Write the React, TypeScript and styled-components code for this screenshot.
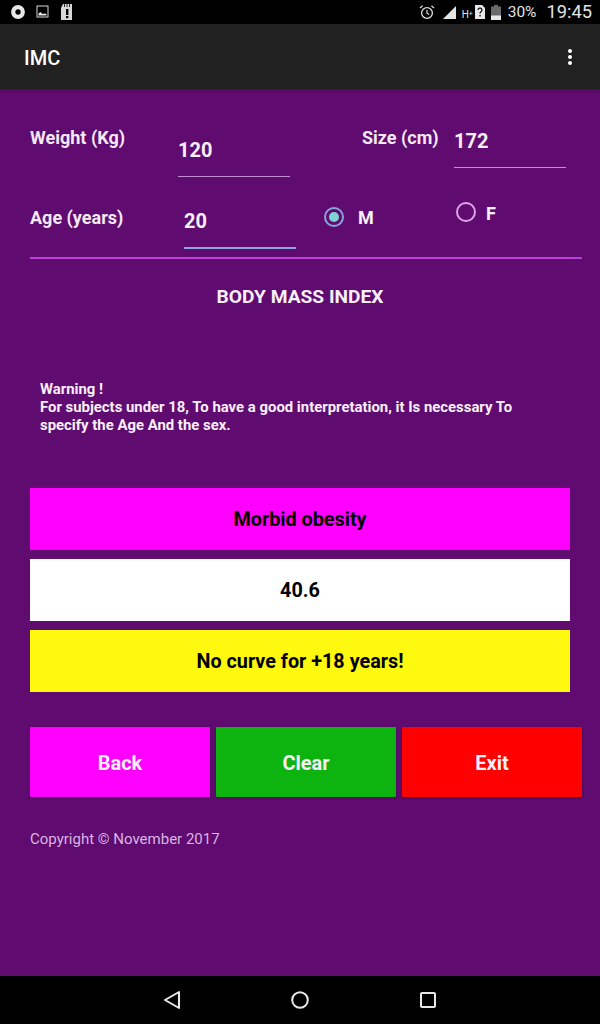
import { createGlobalStyle, styled } from "styled-components";

const GlobalStyle = createGlobalStyle`
  html, body {
    margin: 0;
    padding: 0;
    background: #000;
  }
  * {
    box-sizing: border-box;
  }
`;

const Screen = styled.div`
  display: flex;
  flex-direction: column;
  width: 600px;
  height: 1024px;
  font-family: Roboto, "Liberation Sans", sans-serif;
  color: #fff;
  overflow: hidden;
`;

const StatusBar = styled.div`
  display: flex;
  justify-content: space-between;
  align-items: center;
  flex: 0 0 24px;
  padding: 0 8px 0 10px;
  background: #000;
`;

const StatusGroup = styled.div<{ $gap?: number }>`
  display: flex;
  align-items: center;
  gap: ${(p) => p.$gap ?? 0}px;
`;

const StatusSlot = styled.span<{ $left: number }>`
  display: flex;
  margin-left: ${(p) => p.$left}px;
`;

const StatusText = styled.span<{ $size: number; $left: number }>`
  margin-left: ${(p) => p.$left}px;
  font-size: ${(p) => p.$size}px;
  line-height: 24px;
  color: #e4e4e4;
`;

const NetworkText = styled.span`
  margin: 5px 0 0 5px;
  width: 13px;
  font-size: 10px;
  line-height: 14px;
  color: #e4e4e4;
`;

const Toolbar = styled.div`
  display: flex;
  justify-content: space-between;
  align-items: center;
  flex: 0 0 65px;
  padding: 2px 28px 0 24px;
  background: #212121;
`;

const AppTitle = styled.h1`
  margin: 0;
  font-size: 20px;
  font-weight: 500;
`;

const Dots = styled.div`
  display: flex;
  flex-direction: column;
  gap: 2px;
  margin-top: -2px;
`;

const Dot = styled.span`
  width: 4px;
  height: 4px;
  border-radius: 50%;
  background: #fff;
`;

const Main = styled.main`
  flex: 1;
  padding: 39px 0 0 30px;
  background: linear-gradient(#4f0a5d 0, #600b70 4px);
`;

const Row = styled.div<{ $height: number }>`
  display: flex;
  align-items: flex-start;
  height: ${(p) => p.$height}px;
`;

const Label = styled.label<{ $width: number; $left?: number }>`
  flex: 0 0 ${(p) => p.$width}px;
  margin-left: ${(p) => p.$left ?? 0}px;
  font-size: 18px;
  font-weight: 700;
  line-height: 20px;
  color: #f3e9f5;
`;

const NumberInput = styled.input<{ $height: number; $lift: number; $focused?: boolean }>`
  display: block;
  flex: 0 0 112px;
  width: 112px;
  height: ${(p) => p.$height}px;
  padding: 0 0 ${(p) => p.$lift}px;
  border: 0;
  border-bottom: ${(p) => (p.$focused ? "2px solid #8fa5de" : "1px solid #c08fd0")};
  border-radius: 0;
  outline: none;
  background: transparent;
  color: #f7eff9;
  font-family: inherit;
  font-size: 20px;
  font-weight: 700;
`;

const RadioGroup = styled.div`
  display: flex;
  margin-left: 28px;
`;

const RadioOption = styled.div<{ $width?: number; $top: number; $gap: number }>`
  display: flex;
  align-items: center;
  gap: ${(p) => p.$gap}px;
  width: ${(p) => (p.$width ? `${p.$width}px` : "auto")};
  height: 20px;
  margin-top: ${(p) => p.$top}px;
`;

const RadioText = styled.span<{ $top: number }>`
  margin-top: ${(p) => p.$top}px;
  font-size: 18px;
  font-weight: 700;
  color: #f7eff9;
`;

const RadioCircle = styled.span<{ $checked?: boolean }>`
  display: flex;
  align-items: center;
  justify-content: center;
  width: 20px;
  height: 20px;
  border-radius: 50%;
  border: 2px solid ${(p) => (p.$checked ? "#84a6d8" : "#dba6e6")};
  &::after {
    content: "";
    display: ${(p) => (p.$checked ? "block" : "none")};
    width: 10px;
    height: 10px;
    border-radius: 50%;
    background: #7fd3d3;
  }
`;

const Divider = styled.div`
  width: 552px;
  height: 2px;
  background: #bd3fdb;
`;

const SectionTitle = styled.h2`
  width: 540px;
  margin: 26px 0 0;
  font-size: 19.2px;
  font-weight: 700;
  line-height: 24px;
  text-align: center;
  color: #f7eff9;
`;

const Warning = styled.p`
  width: 500px;
  margin: 71px 0 0;
  padding-left: 10px;
  font-size: 14.9px;
  font-weight: 700;
  line-height: 18px;
  color: #f7eff9;
`;

const ResultList = styled.div`
  display: flex;
  flex-direction: column;
  gap: 9px;
  width: 540px;
  margin-top: 54px;
`;

const ResultBar = styled.div<{ $bg: string }>`
  display: flex;
  align-items: center;
  justify-content: center;
  height: 62px;
  padding-top: 1px;
  background: ${(p) => p.$bg};
  color: #000;
  font-size: 19.8px;
  font-weight: 700;
`;

const ButtonRow = styled.div`
  display: flex;
  gap: 6px;
  margin-top: 35px;
`;

const ActionButton = styled.button<{ $bg: string }>`
  width: 180px;
  height: 70px;
  padding: 2px 0 0;
  border: 0;
  border-radius: 1px;
  background: ${(p) => p.$bg};
  box-shadow: 0 1px 3px rgba(0, 0, 0, 0.35);
  color: #f7eff9;
  font-family: inherit;
  font-size: 20px;
  font-weight: 700;
`;

const Copyright = styled.p`
  margin: 32px 0 0;
  font-size: 15px;
  line-height: 20px;
  color: #d8b4e2;
`;

const NavBar = styled.nav`
  display: flex;
  justify-content: center;
  align-items: center;
  gap: 111px;
  flex: 0 0 48px;
  padding: 0 2px 1px 0;
  background: #000;
`;

const DiscIcon = () => (
  <svg width="16" height="16" viewBox="0 0 16 16">
    <circle cx="8" cy="8" r="4.8" fill="none" stroke="#e8e8e8" strokeWidth="4.2" />
  </svg>
);

const ImageIcon = () => (
  <svg width="14" height="14" viewBox="0 0 14 14">
    <rect x="1" y="1" width="11" height="11" fill="none" stroke="#d8d8d8" />
    <path d="M2.5 10.5V8.5l2-1.5 2 2 2-.5 2 .5v1.5z" fill="#e8e8e8" />
  </svg>
);

const SdIcon = () => (
  <svg width="14" height="18" viewBox="0 0 14 18">
    <path d="M3 1h9v16H1V5z" fill="#d8d8d8" />
    <rect x="6" y="6" width="2.4" height="6" fill="#000" />
    <rect x="6" y="13" width="2.4" height="2.2" fill="#000" />
    <path d="M4.5 1v3M7 1v3M9.5 1v3" stroke="#000" strokeWidth="0.8" />
  </svg>
);

const AlarmIcon = () => (
  <svg width="16" height="16" viewBox="0 0 16 16" fill="none" stroke="#e0e0e0">
    <circle cx="8" cy="9" r="5.4" strokeWidth="1.3" />
    <path d="M8 6v3.2l2.2 1.3M1 4l2.6-2.2M15 4l-2.6-2.2" strokeWidth="1.2" />
  </svg>
);

const SignalIcon = () => (
  <svg width="15" height="15" viewBox="0 0 15 15">
    <path d="M14 1v13H1z" fill="#e4e4e4" />
  </svg>
);

const SimIcon = () => (
  <svg width="10" height="14" viewBox="0 0 10 14">
    <path d="M0 0h7l3 3v11H0z" fill="#e8e8e8" />
    <path d="M3 5a2 2 0 1 1 3 1.8c-.7.4-1 .8-1 1.7" fill="none" stroke="#000" strokeWidth="1.2" />
    <rect x="4.4" y="10" width="1.3" height="1.4" fill="#000" />
  </svg>
);

const BatteryIcon = () => (
  <svg width="10" height="15" viewBox="0 0 10 15">
    <path d="M3 0h4v1.4h3V15H0V1.4h3z" fill="#6a6a6a" />
    <rect y="10.5" width="10" height="4.5" fill="#e8e8e8" />
  </svg>
);

const BackIcon = () => (
  <svg width="18" height="20" viewBox="0 0 18 20">
    <path d="M17 2v16L3 10z" fill="none" stroke="#e8e8e8" strokeWidth="2" strokeLinejoin="round" />
  </svg>
);

const HomeIcon = () => (
  <svg width="18" height="18" viewBox="0 0 18 18">
    <circle cx="9" cy="9" r="7.8" fill="none" stroke="#e8e8e8" strokeWidth="2" />
  </svg>
);

const RecentIcon = () => (
  <svg width="16" height="16" viewBox="0 0 16 16">
    <rect x="1" y="1" width="14" height="14" rx="1" fill="none" stroke="#e8e8e8" strokeWidth="2" />
  </svg>
);

export default function App() {
  return (
    <Screen>
      <GlobalStyle />
      <StatusBar>
        <StatusGroup $gap={10}>
          <DiscIcon />
          <ImageIcon />
          <SdIcon />
        </StatusGroup>
        <StatusGroup>
          <StatusSlot $left={0}>
            <AlarmIcon />
          </StatusSlot>
          <StatusSlot $left={7}>
            <SignalIcon />
          </StatusSlot>
          <NetworkText>H⁺</NetworkText>
          <StatusSlot $left={0}>
            <SimIcon />
          </StatusSlot>
          <StatusSlot $left={6}>
            <BatteryIcon />
          </StatusSlot>
          <StatusText $size={15.5} $left={7}>30%</StatusText>
          <StatusText $size={18.3} $left={10}>19:45</StatusText>
        </StatusGroup>
      </StatusBar>

      <Toolbar>
        <AppTitle>IMC</AppTitle>
        <Dots>
          <Dot />
          <Dot />
          <Dot />
        </Dots>
      </Toolbar>

      <Main>
        <Row $height={80}>
          <Label $width={148}>Weight (Kg)</Label>
          <NumberInput $height={49} $lift={4} defaultValue="120" />
          <Label $width={92} $left={72}>Size (cm)</Label>
          <NumberInput $height={40} $lift={14} defaultValue="172" />
        </Row>
        <Row $height={49}>
          <Label $width={154}>Age (years)</Label>
          <NumberInput $height={41} $lift={13} $focused defaultValue="20" />
          <RadioGroup>
            <RadioOption $width={132} $top={-1} $gap={14}>
              <RadioCircle $checked />
              <RadioText $top={1}>M</RadioText>
            </RadioOption>
            <RadioOption $top={-6} $gap={10}>
              <RadioCircle />
              <RadioText $top={3}>F</RadioText>
            </RadioOption>
          </RadioGroup>
        </Row>
        <Divider />
        <SectionTitle>BODY MASS INDEX</SectionTitle>
        <Warning>
          Warning !
          <br />
          For subjects under 18, To have a good interpretation, it Is necessary To specify the Age And the sex.
        </Warning>
        <ResultList>
          <ResultBar $bg="#ff00ff">Morbid obesity</ResultBar>
          <ResultBar $bg="#ffffff">40.6</ResultBar>
          <ResultBar $bg="#fff90f">No curve for +18 years!</ResultBar>
        </ResultList>
        <ButtonRow>
          <ActionButton $bg="#ff00ff">Back</ActionButton>
          <ActionButton $bg="#0db30f">Clear</ActionButton>
          <ActionButton $bg="#ff0000">Exit</ActionButton>
        </ButtonRow>
        <Copyright>Copyright © November 2017</Copyright>
      </Main>

      <NavBar>
        <BackIcon />
        <HomeIcon />
        <RecentIcon />
      </NavBar>
    </Screen>
  );
}
